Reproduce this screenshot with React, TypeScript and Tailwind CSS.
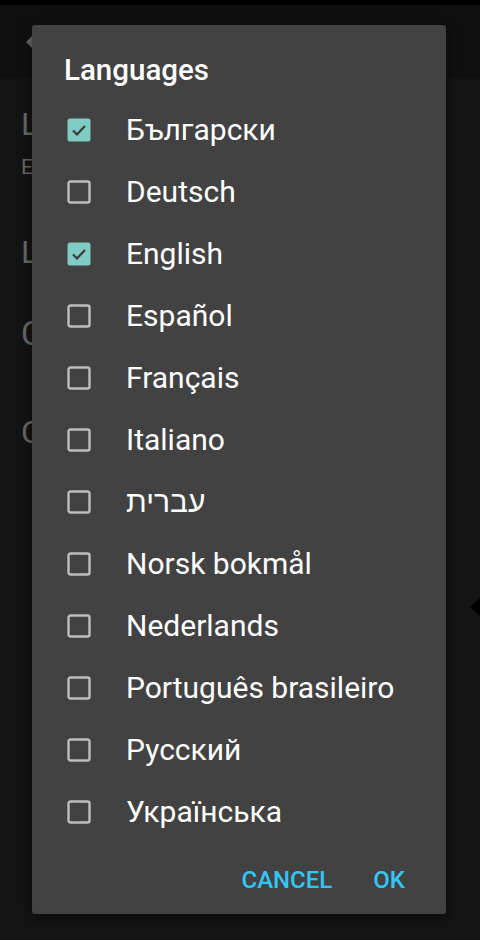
import React from "react";

const langs: [string, boolean][] = [
  ["Български", true],
  ["Deutsch", false],
  ["English", true],
  ["Español", false],
  ["Français", false],
  ["Italiano", false],
  ["עברית", false],
  ["Norsk bokmål", false],
  ["Nederlands", false],
  ["Português brasileiro", false],
  ["Русский", false],
  ["Українська", false],
];

function Box({ checked }: { checked: boolean }) {
  if (checked) {
    return (
      <svg width="24" height="24" viewBox="0 0 24 24">
        <rect x="0.5" y="0.5" width="23" height="23" rx="2.5" fill="#80cbc4" />
        <path d="M6 12.5 L10 16.5 L18 8" fill="none" stroke="#3a3a3a" strokeWidth="2.2" />
      </svg>
    );
  }
  return (
    <svg width="24" height="24" viewBox="0 0 24 24">
      <rect x="1.5" y="1.5" width="21" height="21" rx="2" fill="none" stroke="#bdbdbd" strokeWidth="2.4" />
    </svg>
  );
}

export default function App() {
  return (
    <div
      className="relative w-[480px] h-[940px] overflow-hidden bg-[#141414]"
      style={{ fontFamily: "Roboto, 'Noto Sans', sans-serif" }}
    >
      <div className="h-[5px] bg-black" />
      <div className="h-[73px] bg-[#101010] flex items-center pl-[26px]">
        <svg width="12" height="20" viewBox="0 0 12 20">
          <path d="M8 2 L0 10 L8 18 Z" fill="#6a6a6a" />
        </svg>
      </div>
      <div className="pl-[21px] text-[#6b6b6b]">
        <div className="pt-[30px] text-[32px] leading-[32px]">Language</div>
        <div className="pt-[17px] text-[21px] leading-[21px]">English</div>
        <div className="pt-[58px] text-[32px] leading-[32px]">Language</div>
        <div className="pt-[50px] text-[33px] leading-[32px]">C</div>
        <div className="pt-[66px] text-[32px] leading-[32px]">C</div>
      </div>
      <div className="absolute right-0 top-[598px] w-0 h-0 border-y-[9px] border-y-transparent border-r-[10px] border-r-black" />

      <div className="absolute left-[32px] top-[25px] w-[414px] h-[889px] bg-[#424242] rounded-[3px] shadow-[0_4px_16px_rgba(0,0,0,0.5)] flex flex-col">
        <div className="pl-[32px] pt-[31px] h-[74px] text-white text-[29.5px] leading-[28px] font-medium">
          Languages
        </div>
        <div className="flex flex-col">
          {langs.map(([name, checked]) => (
            <div key={name} className="h-[62px] flex items-center">
              <div className="pl-[35px] w-[94px] flex items-center">
                <Box checked={checked} />
              </div>
              <span className="text-white text-[30px] leading-[32px]">{name}</span>
            </div>
          ))}
        </div>
        <div className="flex-1 flex justify-end items-start pt-[24px] pr-[41px] gap-[41px] text-[#33c6f5] text-[24px] leading-[26px] font-medium">
          <span>CANCEL</span>
          <span>OK</span>
        </div>
      </div>
    </div>
  );
}
